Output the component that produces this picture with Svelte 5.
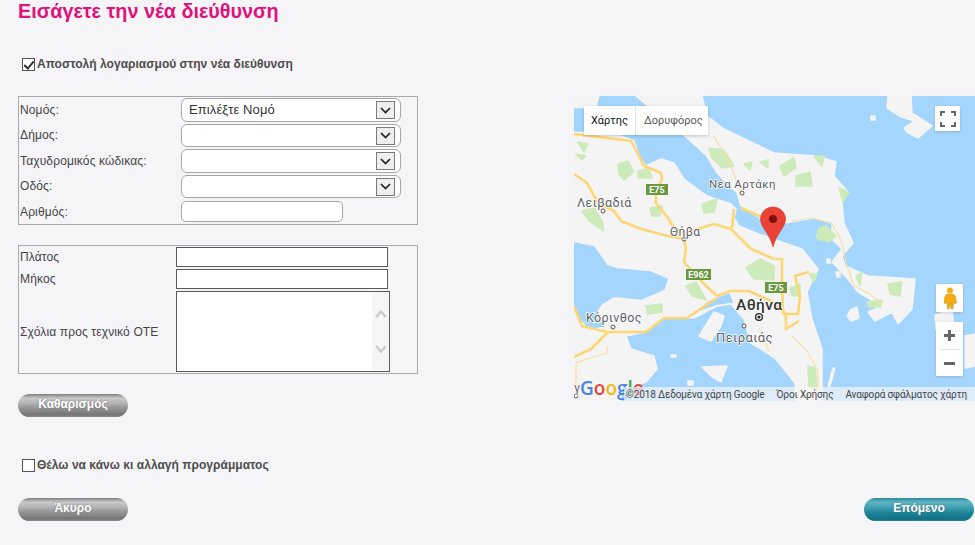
<script>
  // map features, in map pixels (401x305)
  const land = [
    // Boeotia, Attica and the Isthmus
    'M0 0H25L22 10 33 14 42 38 60 45 65 60 72 70 87 63 100 67 110 83 133 100 157 108 162 113 160 122 165 130 182 137 205 145 228 153 244 173 233 196 238 223 248 253 248 305H222L221 287 201 262 187 253 177 247 170 223 157 208 143 210 120 222 90 222 72 236 52 240 57 253 80 260 83 273 72 286 47 293 47 305H0Z',
    // Euboea
    'M62 0H128L133 20 150 33 200 57 227 59 243 60 262 66 260 80 273 95 268 107 270 127 279 147 268 160 271 170 294 180 341 183 338 213 324 228 318 216 301 225 294 216 308 210 284 196 274 183 258 166 268 153 258 143 258 127 240 122 211 127 186 122 167 110 163 97 143 77 133 60 113 42Z'
  ];
  const water = [
    'M0 13H10V35H0Z',
    'M0 147L20 151 33 170 43 173 76 176 93 183 90 193 67 203 40 200 27 208 20 220 30 230 15 232 5 220 0 208Z',
    'M155 198L158 206 143 208 125 214 135 206Z'
  ];
  const islands = [
    'M125 240L140 216 150 220 147 230 137 245Z',
    'M128 271L153 270 147 286 137 280Z',
    'M314 0H337L338 17 358 30 344 42 333 36 330 32 340 25 325 20 313 12Z',
    'M297 20h4v4h-4Z',
    'M276 214l7-3 2 11-8 3-4-5Z',
    'M262 176h4v5h-3Z',
    'M253 163h3v4h-3Z',
    'M361 219L378 214 380 233 362 234Z',
    'M391 240L401 238V270L391 272Z',
    'M114 285h5v4h-5Z',
    'M97 259h5v2h-5Z',
    'M259 272L261 272 256 290 254 290Z'
  ];
  const parks = [
    'M44 68L54 65 60 76 50 84 45 78Z', 'M64 75L75 72 78 82 64 82Z', 'M8 115L20 112 28 125 30 135 15 125Z',
    'M4 46L14 48 10 56Z', 'M2 58L12 60 8 64Z', 'M135 52L150 54 160 70 148 72 138 62Z', 'M170 68L178 66 176 74Z',
    'M186 66L194 64 194 72Z', 'M128 108L143 103 140 116 130 117Z', 'M76 112L88 110 86 120 78 120Z',
    'M222 80L236 76 238 90 222 90Z', 'M206 70L220 62 222 72 210 80Z', 'M240 60L250 60 248 70Z',
    'M265 92L275 96 269 106Z', 'M245 132L252 130 262 140 255 146 242 142Z',
    'M172 172L186 163 200 170 200 184 180 183Z', 'M112 190L122 186 132 204 118 200Z', 'M72 210L88 208 88 216 74 218Z',
    'M314 188L328 186 326 200 316 198Z', 'M293 206L308 204 306 211 295 211Z', 'M282 180L288 176 286 190Z',
    'M234 270L241 272 244 295 235 290Z', 'M235 178L243 178 240 186Z', 'M216 192L226 188 226 200 218 200Z'
  ];
  const roads = [
    'M0 38L33 42 57 45 64 58 70 70 87 77 88 83 82 97 82 107 94 122 100 132 110 137 140 128 157 133 177 153',
    'M0 78L13 87 24 107 40 115 47 125 67 133 94 140 113 143',
    'M110 143L112 153', 'M160 113L158 132', 'M167 112L190 122',
    'M112 153L110 166 128 186 143 200 156 195 175 195 197 205',
    'M0 210L8 230 33 236 72 236 90 222 113 222 143 202',
    'M34 236L17 253 0 261', 'M177 153L200 163',
    'M201 163H208V183 L209 218', 'M197 205L212 218 212 233 225 225',
    'M209 218L224 218 226 200 221 180 235 176'
  ];
  const thinRoads = [
    'M140 40L157 70 167 97', 'M218 125L238 122 257 127 265 140 270 153',
    'M269 153L273 170 280 190 296 198 308 208', 'M33 250V257L13 263 2 267V295',
    'M218 240L233 255 244 275 244 290', 'M185 232L195 255'
  ];
  const places = [
    { name: 'Λειβαδιά', x: 3, y: 111, size: 12.5 },
    { name: 'Νέα Αρτάκη', x: 135, y: 92, size: 11.5 },
    { name: 'Θήβα', x: 96, y: 140, size: 12 },
    { name: 'Κόρινθος', x: 12, y: 226, size: 12.5 },
    { name: 'Πειραιάς', x: 142, y: 246, size: 13 },
    { name: 'Αθήνα', x: 162, y: 214, size: 15.5, strong: true },
    { name: 'γ', x: 0, y: 296, size: 12 }
  ];
  const dots = [[29, 115], [168, 97], [110, 143], [39, 231], [170, 230], [2, 300]];
  const shields = [
    { name: 'E75', x: 72, y: 88, w: 22 },
    { name: 'E962', x: 112, y: 173, w: 25 },
    { name: 'E75', x: 191, y: 186, w: 22 }
  ];
  const selects = [
    { label: 'Νομός:', value: 'Επιλέξτε Νομό' },
    { label: 'Δήμος:', value: '' },
    { label: 'Ταχυδρομικός κώδικας:', value: '' },
    { label: 'Οδός:', value: '' }
  ];
  let sendBill = $state(true);
  let changeProgram = $state(false);
</script>

<div class="page">
  <h1>Εισάγετε την νέα διεύθυνση</h1>

  <label class="check first">
    <input type="checkbox" bind:checked={sendBill} />
    <span>Αποστολή λογαριασμού στην νέα διεύθυνση</span>
  </label>

  <div class="columns">
    <div class="left">
      <div class="panel address">
        {#each selects as s}
          <div class="field">
            <span class="lbl">{s.label}</span>
            <div class="select">
              <span>{s.value}</span>
              <i class="arrow">
                <svg width="11" height="7" viewBox="0 0 11 7"><path d="M1 1l4.500 4.500L10 1" fill="none" stroke="#222" stroke-width="1.7" /></svg>
              </i>
            </div>
          </div>
        {/each}
        <div class="field number">
          <span class="lbl">Αριθμός:</span>
          <input class="round" type="text" />
        </div>
      </div>

      <div class="panel coords">
        <div class="cfield"><span class="lbl">Πλάτος</span><input class="square" type="text" /></div>
        <div class="cfield"><span class="lbl">Μήκος</span><input class="square" type="text" /></div>
        <div class="cfield">
          <span class="lbl">Σχόλια προς τεχνικό ΟΤΕ</span>
          <div class="notes">
            <div class="track">
              <svg width="14" height="9" viewBox="0 0 14 9"><path d="M2 8l5-5.500 5 5.500" fill="none" stroke="#c9c9c9" stroke-width="2.400" /></svg>
              <svg width="14" height="9" viewBox="0 0 14 9"><path d="M2 1l5 5.500 5-5.500" fill="none" stroke="#c9c9c9" stroke-width="2.400" /></svg>
            </div>
          </div>
        </div>
      </div>

      <button class="pill grey clear">Καθαρισμός</button>

      <label class="check second">
        <input type="checkbox" bind:checked={changeProgram} />
        <span>Θέλω να κάνω κι αλλαγή προγράμματος</span>
      </label>
    </div>

    <div class="map">
      <svg class="tiles" width="401" height="305" viewBox="0 0 401 305">
        <rect width="401" height="305" fill="#a3d5fd" />
        <g class="shapes">
          {#each land as d}<path {d} class="soft" fill="#f4f4f4" stroke="#f4f4f4" />{/each}
          {#each water as d}<path {d} class="soft" fill="#a3d5fd" stroke="#a3d5fd" />{/each}
          {#each islands as d}<path {d} class="soft" fill="#f4f4f4" stroke="#f4f4f4" />{/each}
          {#each parks as d}<path {d} class="soft" fill="#cdeabb" stroke="#cdeabb" />{/each}
          {#each thinRoads as d}<path {d} fill="none" stroke="#f5dfa6" stroke-width="1.2" />{/each}
          {#each roads as d}<path {d} fill="none" stroke="#fdd774" stroke-width="2.6" stroke-linejoin="round" />{/each}
        </g>
        {#each dots as [cx, cy]}<circle {cx} {cy} r="2" fill="#fff" stroke="#555" />{/each}
        <circle cx="185" cy="221" r="3.4" fill="#fff" stroke="#222" stroke-width="1.3" />
        <circle cx="185" cy="221" r="1.6" fill="#222" />
        {#each places as p}
          <text class="place" class:strong={p.strong} x={p.x} y={p.y} font-size={p.size}>{p.name}</text>
        {/each}
        {#each shields as s}
          <rect x={s.x} y={s.y} width={s.w} height="11" fill="#69993f" />
          <text class="shield" x={s.x + s.w / 2} y={s.y + 8.6}>{s.name}</text>
        {/each}
        <path d="M199 111c-7 0-12.500 5.500-12.500 12 0 8.500 9 14 12.500 28 3.500-14 12.500-19.500 12.500-28 0-6.500-5.500-12-12.500-12z" fill="#ea4335" stroke="#d5352a" stroke-width=".6" />
        <circle cx="199" cy="123" r="4" fill="#7b120c" />
      </svg>

      <div class="types">
        <span class="on">Χάρτης</span>
        <span>Δορυφόρος</span>
      </div>

      <div class="ctl fullscreen">
        <svg width="16" height="16" viewBox="0 0 16 16"><path d="M1 5V1h4M11 1h4v4M15 11v4h-4M5 15H1v-4" fill="none" stroke="#666" stroke-width="2" /></svg>
      </div>
      <div class="ctl pegman">
        <svg width="14" height="22" viewBox="0 0 14 22">
          <circle cx="7" cy="3.500" r="3" fill="#f5ac15" />
          <path d="M4 7h6l2.500 2 1 7-2 .5-1-1-.5 6.500H8l-1-6-1 6H4.500L4 15.500l-1 1-2-.5 1-7z" fill="#f5ac15" stroke="#c9890f" stroke-width=".5" />
        </svg>
      </div>
      <div class="ctl zoom">
        <span class="plus"></span>
        <hr />
        <span class="minus"></span>
      </div>

      <div class="logo"><span class="blue">G</span><span class="red">o</span><span class="yellow">o</span><span class="blue">g</span><span class="green">l</span><span class="red">e</span></div>
      <div class="attrib">
        <span>©2018 Δεδομένα χάρτη Google</span>
        <span>Όροι Χρήσης</span>
        <span>Αναφορά σφάλματος χάρτη</span>
      </div>
    </div>
  </div>

  <div class="actions">
    <button class="pill grey">Άκυρο</button>
    <button class="pill teal">Επόμενο</button>
  </div>
</div>

<style>
  :global(body) {
    margin: 0;
    background: #f5f5f7;
  }

  .page {
    width: 975px;
    height: 545px;
    overflow: hidden;
    padding-left: 18px;
    box-sizing: border-box;
    font-family: "Liberation Sans", Arial, sans-serif;
    color: #444;
  }

  h1 {
    margin: 0;
    height: 22px;
    line-height: 22px;
    font-size: 19.8px;
    font-weight: bold;
    color: #e0107c;
  }

  .check {
    display: flex;
    align-items: center;
    gap: 2px;
    margin-left: 4px;
    font-size: 12px;
    font-weight: bold;
    letter-spacing: 0.03px;
    color: #4d4d4d;
  }

  .check.first {
    margin-top: 35px;
    height: 14px;
  }

  .check.second {
    margin-top: 41px;
    height: 14px;
  }

  .check input {
    appearance: none;
    flex: none;
    position: relative;
    width: 13px;
    height: 13px;
    margin: 0;
    box-sizing: border-box;
    background: #fff;
    border: 1px solid #555;
  }

  .check input:checked::after {
    content: "";
    position: absolute;
    left: 3px;
    top: 0;
    width: 4px;
    height: 8px;
    border: solid #333;
    border-width: 0 2px 2px 0;
    transform: rotate(40deg);
  }

  .columns {
    display: flex;
    align-items: flex-start;
    margin-top: 25px;
  }

  .left {
    width: 400px;
  }

  .panel {
    box-sizing: border-box;
    width: 400px;
    border: 1px solid #a9a9a9;
  }

  .address {
    height: 129px;
    padding-top: 1px;
  }

  .coords {
    height: 129px;
    margin-top: 20px;
    padding-top: 1px;
  }

  .lbl {
    font-size: 12px;
    letter-spacing: 0.14px;
    color: #444;
    padding-left: 1px;
  }

  .field {
    display: grid;
    grid-template-columns: 162px 220px;
    align-items: center;
    margin-bottom: 2px;
  }

  .select {
    position: relative;
    box-sizing: border-box;
    height: 23.500px;
    line-height: 21px;
    padding-left: 7px;
    font-size: 13px;
    letter-spacing: 0.1px;
    color: #333;
    background: #fff;
    border: 1px solid #a6a6a6;
    border-radius: 6px;
  }

  .arrow {
    position: absolute;
    top: 2px;
    right: 5px;
    display: flex;
    align-items: center;
    justify-content: center;
    box-sizing: border-box;
    width: 19px;
    height: 18px;
    background: #efefef;
    border: 1px solid #7a7a7a;
  }

  .number {
    margin-top: 3px;
    margin-bottom: 0;
  }

  .round {
    box-sizing: border-box;
    width: 162px;
    height: 21px;
    background: #fff;
    border: 1px solid #a6a6a6;
    border-radius: 5px;
    padding: 0;
  }

  .cfield {
    display: grid;
    grid-template-columns: 157px auto;
    align-items: center;
    margin-bottom: 2px;
  }

  .square {
    box-sizing: border-box;
    width: 212px;
    height: 20px;
    padding: 0;
    background: #fff;
    border: 1px solid #5a5a5a;
  }

  .notes {
    box-sizing: border-box;
    display: flex;
    justify-content: flex-end;
    width: 214px;
    height: 81px;
    background: #fff;
    border: 1px solid #5a5a5a;
  }

  .track {
    display: flex;
    flex-direction: column;
    justify-content: space-between;
    align-items: center;
    box-sizing: border-box;
    width: 17px;
    padding: 17px 0 17px;
    background: #f6f6f6;
  }

  .pill {
    display: block;
    box-sizing: border-box;
    width: 110px;
    height: 23px;
    padding: 0 0 3px;
    border: 0;
    border-radius: 12px;
    font-family: inherit;
    font-size: 12px;
    font-weight: bold;
    color: #fff;
    text-shadow: 0 0 2px rgba(80, 80, 80, 0.6);
  }

  .grey {
    background: linear-gradient(#7f7f7f 0, #c9c9c9 18%, #b5b5b5 38%, #999 58%, #757575 90%, #8c8c8c 100%);
  }

  .teal {
    background: linear-gradient(#2c8a9c 0, #62b4c3 18%, #3f9fb1 42%, #1d8598 65%, #0f6f82 92%, #2a8899 100%);
  }

  .clear {
    margin-top: 20px;
  }

  .map {
    position: relative;
    width: 401px;
    height: 305px;
    margin-left: 156px;
    overflow: hidden;
    font-family: Roboto, sans-serif;
  }

  .tiles {
    display: block;
  }

  .shapes {
    filter: blur(0.6px);
  }

  .soft {
    stroke-width: 1.5px;
    stroke-linejoin: round;
  }

  .place {
    font-family: Roboto, sans-serif;
    letter-spacing: 0.4px;
    fill: #5c5f66;
    stroke: #fff;
    stroke-width: 1.5px;
    paint-order: stroke;
  }

  .place.strong {
    fill: #333;
    font-weight: 500;
  }

  .shield {
    font-family: Roboto, sans-serif;
    font-size: 9px;
    font-weight: bold;
    fill: #fff;
    text-anchor: middle;
  }

  .types {
    position: absolute;
    left: 10px;
    top: 10px;
    display: flex;
    height: 29px;
    background: #fff;
    box-shadow: 0 1px 3px rgba(0, 0, 0, 0.2);
    font-size: 11px;
    color: #555;
  }

  .types span {
    display: flex;
    align-items: center;
    padding: 0 5px 0 8px;
  }

  .types .on {
    padding: 0 7px;
    color: #111;
    border-right: 1px solid #e6e6e6;
  }

  .ctl {
    position: absolute;
    display: flex;
    align-items: center;
    justify-content: center;
    background: #fff;
    box-shadow: 0 1px 3px rgba(0, 0, 0, 0.15);
  }

  .fullscreen {
    left: 361px;
    top: 10px;
    width: 25px;
    height: 25px;
  }

  .pegman {
    left: 362px;
    top: 188px;
    width: 27px;
    height: 28px;
  }

  .zoom {
    left: 362px;
    top: 226px;
    width: 27px;
    height: 54px;
    flex-direction: column;
  }

  .zoom hr {
    width: 21px;
    margin: 0;
    border: 0;
    border-top: 1px solid #e6e6e6;
  }

  .plus,
  .minus {
    position: relative;
    display: block;
    flex: 1;
    width: 100%;
  }

  .plus::before,
  .plus::after,
  .minus::before {
    content: "";
    position: absolute;
    left: 8px;
    top: 12px;
    width: 11px;
    height: 3px;
    background: #666;
  }

  .plus::after {
    left: 12px;
    top: 8px;
    width: 3px;
    height: 11px;
  }

  .logo {
    position: absolute;
    left: 6px;
    top: 281px;
    font-family: "Open Sans", sans-serif;
    font-size: 19px;
    font-weight: 600;
    line-height: 22px;
    white-space: nowrap;
  }

  .blue { color: #4a82e8; }
  .red { color: #e5483c; }
  .yellow { color: #f2bb14; }
  .green { color: #3fa757; }

  .attrib {
    position: absolute;
    left: 50px;
    right: 0;
    bottom: 0;
    display: flex;
    gap: 12px;
    height: 14px;
    line-height: 15px;
    padding-left: 2px;
    font-size: 10px;
    letter-spacing: -0.14px;
    color: #444;
    white-space: nowrap;
    background: rgba(245, 245, 245, 0.7);
  }

  .actions {
    display: flex;
    justify-content: space-between;
    width: 956px;
    margin-top: 26px;
  }
</style>
